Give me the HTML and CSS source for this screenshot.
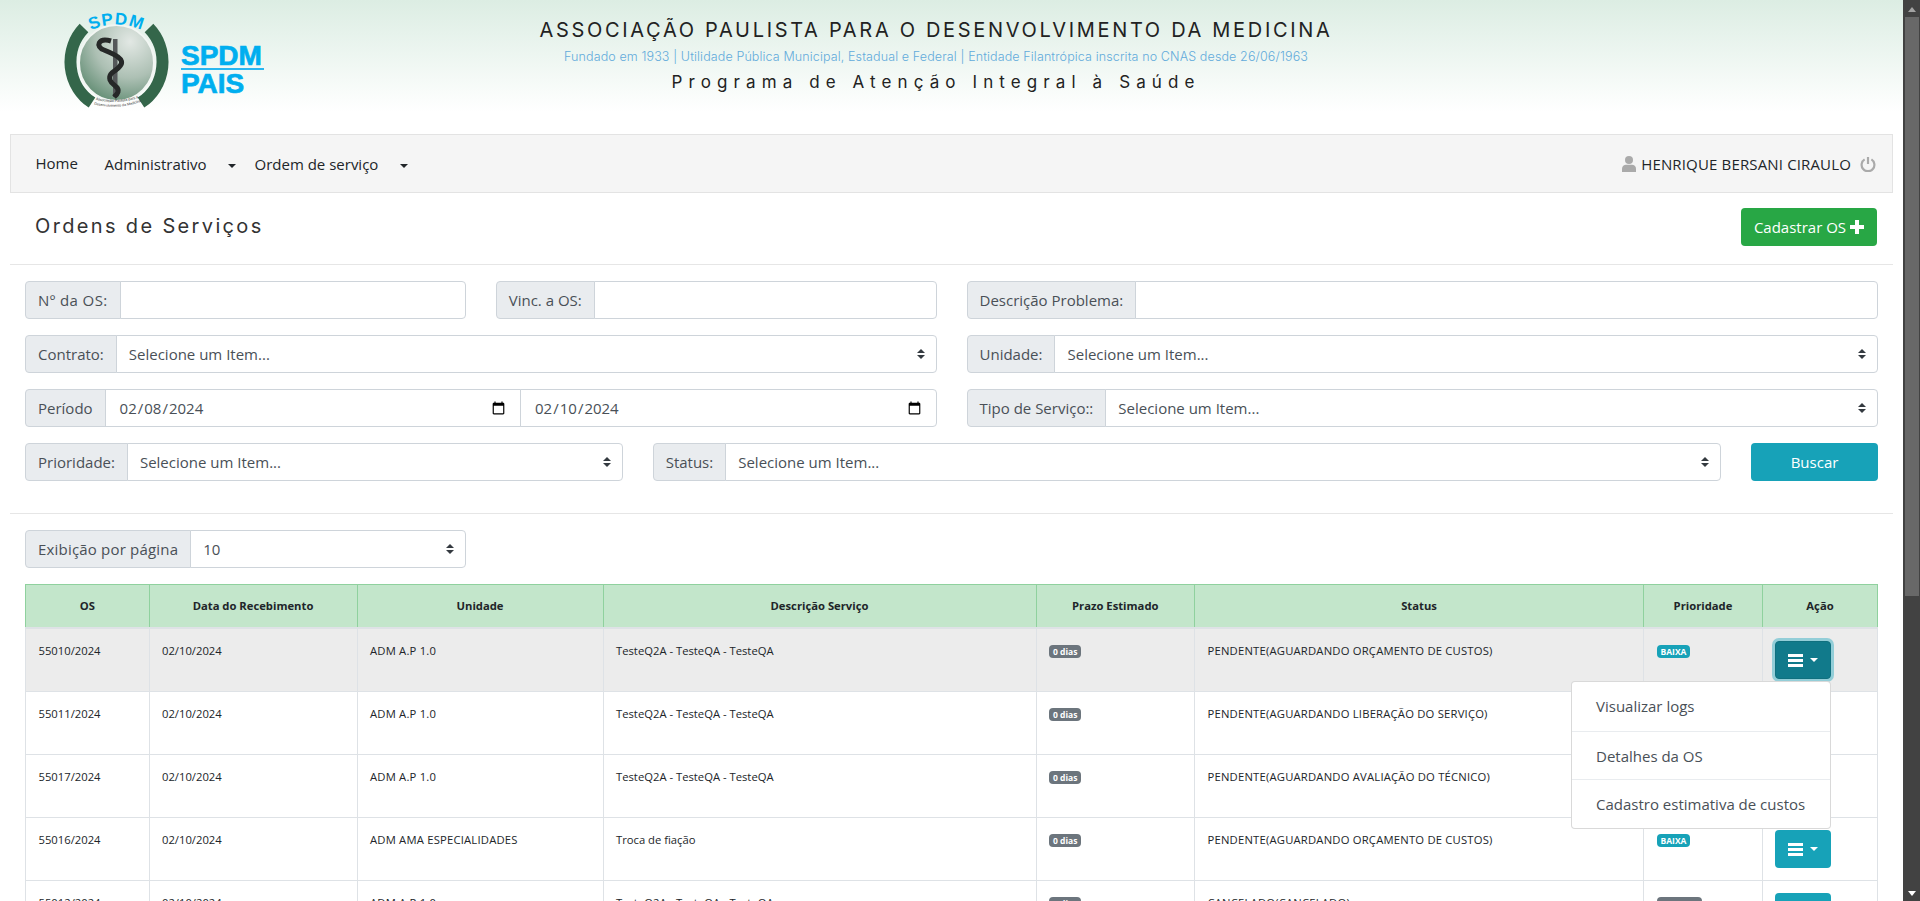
FILE: index.html
```html
<!DOCTYPE html>
<html lang="pt-BR">
<head>
  <meta charset="UTF-8">
  <title>Ordens de Serviços</title>
  <link rel="stylesheet" href="styles.css">
</head>
<body>
  <div class="page">
    <header class="site-header">
      <svg class="logo" viewBox="60 8 210 104" width="210" height="104">
        <defs>
          <radialGradient id="discFill" cx="0.68" cy="0.22" r="0.95">
            <stop offset="0" stop-color="#e2e8e4"/>
            <stop offset="0.5" stop-color="#adc0b4"/>
            <stop offset="1" stop-color="#4f8063"/>
          </radialGradient>
          <path id="arcTop" d="M82 35 Q116.5 14 151 35"/>
          <path id="arcBottom1" d="M90 98 Q116 107 144 96"/>
          <path id="arcBottom2" d="M89 103 Q116 112 146 100"/>
        </defs>
        <path class="logo-band" d="M84 28 A46 48 0 0 0 92 102.6"/>
        <path class="logo-band" d="M149 28 A46 48 0 0 1 141 102.6"/>
        <ellipse cx="116.5" cy="63" rx="37.5" ry="38" fill="url(#discFill)" stroke="#f2f6f3" stroke-width="2"/>
        <rect x="113" y="39" width="4.5" height="58" fill="#55585a"/>
        <path class="logo-snake" d="M111 41 C98 37 95 47 104 50 C114 54 126 59 120 66 C116 72 108 72 110 80 C112 86 120 86 118 92 C117 95 115 96 114 97"/>
        <text class="logo-arc"><textPath href="#arcTop" startOffset="50%" text-anchor="middle">SPDM</textPath></text>
        <text class="logo-tiny"><textPath href="#arcBottom1" startOffset="50%" text-anchor="middle">Associação Paulista para a</textPath></text>
        <text class="logo-tiny"><textPath href="#arcBottom2" startOffset="50%" text-anchor="middle">Desenvolvimento da Medicina</textPath></text>
        <text class="logo-word" x="181" y="65">SPDM</text>
        <rect x="181" y="68" width="83" height="2" fill="#29b6f0"/>
        <text class="logo-word" x="181" y="93">PAIS</text>
      </svg>
      <div class="header-text">
        <h1>ASSOCIAÇÃO PAULISTA PARA O DESENVOLVIMENTO DA MEDICINA</h1>
        <p class="header-sub">Fundado em 1933 | Utilidade Pública Municipal, Estadual e Federal | Entidade Filantrópica inscrita no CNAS desde 26/06/1963</p>
        <p class="header-prog">Programa de Atenção Integral à Saúde</p>
      </div>
    </header>

    <nav class="navbar">
      <a class="nav-link nav-home" href="#">Home</a>
      <a class="nav-link nav-admin" href="#">Administrativo<span class="caret"></span></a>
      <a class="nav-link nav-ordem" href="#">Ordem de serviço<span class="caret"></span></a>
      <div class="nav-user">
        <svg class="icon-user" viewBox="0 0 14 16" width="14" height="16"><circle cx="7" cy="4" r="4"/><path d="M0 16V12.5C0 10 2 8.7 4 8.7H10C12 8.7 14 10 14 12.5V16Z"/></svg>
        <span>HENRIQUE BERSANI CIRAULO</span>
        <svg class="icon-power" viewBox="0 0 16 16" width="16" height="16"><path d="M4.6 3.4A6.4 6.4 0 1 0 11.4 3.4"/><path d="M8 1V8"/></svg>
      </div>
    </nav>

    <div class="title-row">
      <h2>Ordens de Serviços</h2>
      <a class="btn btn-green" href="#">Cadastrar OS
        <svg viewBox="0 0 14 14" width="14" height="14"><path d="M5 0H9V5H14V9H9V14H5V9H0V5H5Z" fill="#fff"/></svg>
      </a>
    </div>

    <form class="filters">
      <div class="input-group col-3"><label class="label-wide">Nº da OS:</label><input type="text"></div>
      <div class="input-group col-3"><label>Vinc. a OS:</label><input type="text"></div>
      <div class="input-group col-6"><label>Descrição Problema:</label><input type="text"></div>

      <div class="input-group col-6"><label>Contrato:</label><div class="select-wrap"><select><option>Selecione um Item...</option></select></div></div>
      <div class="input-group col-6"><label>Unidade:</label><div class="select-wrap"><select><option>Selecione um Item...</option></select></div></div>

      <div class="input-group col-6"><label>Período</label><input class="date" type="date" value="2024-02-08"><input class="date date-end" type="date" value="2024-02-10"></div>
      <div class="input-group col-6"><label>Tipo de Serviço::</label><div class="select-wrap"><select><option>Selecione um Item...</option></select></div></div>

      <div class="input-group col-4"><label>Prioridade:</label><div class="select-wrap"><select><option>Selecione um Item...</option></select></div></div>
      <div class="input-group col-7"><label>Status:</label><div class="select-wrap"><select><option>Selecione um Item...</option></select></div></div>
      <button class="btn btn-info col-1" type="button">Buscar</button>
    </form>

    <hr class="divider">

    <div class="filters page-size">
      <div class="input-group col-3"><label class="label-long">Exibição por página</label><div class="select-wrap"><select><option>10</option><option>25</option></select></div></div>
    </div>

    <table class="os-table">
      <colgroup>
        <col class="c-os"><col class="c-data"><col class="c-unidade"><col class="c-desc">
        <col class="c-prazo"><col class="c-status"><col class="c-prio"><col class="c-acao">
      </colgroup>
      <thead>
        <tr>
          <th>OS</th><th>Data do Recebimento</th><th>Unidade</th><th>Descrição Serviço</th>
          <th>Prazo Estimado</th><th>Status</th><th>Prioridade</th><th>Ação</th>
        </tr>
      </thead>
      <tbody>
        <tr class="row-hover">
          <td>55010/2024</td><td>02/10/2024</td><td class="caps">ADM A.P 1.0</td><td>TesteQ2A - TesteQA - TesteQA</td>
          <td><span class="badge badge-gray">0 dias</span></td>
          <td class="caps">PENDENTE(AGUARDANDO ORÇAMENTO DE CUSTOS)</td>
          <td><span class="badge badge-info">BAIXA</span></td>
          <td class="cell-action">
            <div class="btn-group">
              <button class="btn btn-action is-open" type="button">
                <svg viewBox="0 0 15 13" width="15" height="13"><path d="M0 0H15V3H0ZM0 5H15V8H0ZM0 10H15V13H0Z" fill="#fff"/></svg><span class="caret"></span>
              </button>
              <div class="menu">
                <a href="#">Visualizar logs</a>
                <a href="#">Detalhes da OS</a>
                <a href="#">Cadastro estimativa de custos</a>
              </div>
            </div>
          </td>
        </tr>
        <tr>
          <td>55011/2024</td><td>02/10/2024</td><td class="caps">ADM A.P 1.0</td><td>TesteQ2A - TesteQA - TesteQA</td>
          <td><span class="badge badge-gray">0 dias</span></td>
          <td class="caps">PENDENTE(AGUARDANDO LIBERAÇÃO DO SERVIÇO)</td>
          <td><span class="badge badge-info">BAIXA</span></td>
          <td class="cell-action"><button class="btn btn-action" type="button"><svg viewBox="0 0 15 13" width="15" height="13"><path d="M0 0H15V3H0ZM0 5H15V8H0ZM0 10H15V13H0Z" fill="#fff"/></svg><span class="caret"></span></button></td>
        </tr>
        <tr>
          <td>55017/2024</td><td>02/10/2024</td><td class="caps">ADM A.P 1.0</td><td>TesteQ2A - TesteQA - TesteQA</td>
          <td><span class="badge badge-gray">0 dias</span></td>
          <td class="caps">PENDENTE(AGUARDANDO AVALIAÇÃO DO TÉCNICO)</td>
          <td><span class="badge badge-info">BAIXA</span></td>
          <td class="cell-action"><button class="btn btn-action" type="button"><svg viewBox="0 0 15 13" width="15" height="13"><path d="M0 0H15V3H0ZM0 5H15V8H0ZM0 10H15V13H0Z" fill="#fff"/></svg><span class="caret"></span></button></td>
        </tr>
        <tr>
          <td>55016/2024</td><td>02/10/2024</td><td class="caps">ADM AMA ESPECIALIDADES</td><td>Troca de fiação</td>
          <td><span class="badge badge-gray">0 dias</span></td>
          <td class="caps">PENDENTE(AGUARDANDO ORÇAMENTO DE CUSTOS)</td>
          <td><span class="badge badge-info">BAIXA</span></td>
          <td class="cell-action"><button class="btn btn-action" type="button"><svg viewBox="0 0 15 13" width="15" height="13"><path d="M0 0H15V3H0ZM0 5H15V8H0ZM0 10H15V13H0Z" fill="#fff"/></svg><span class="caret"></span></button></td>
        </tr>
        <tr>
          <td>55012/2024</td><td>02/10/2024</td><td class="caps">ADM A.P 1.0</td><td>TesteQ2A - TesteQA - TesteQA</td>
          <td><span class="badge badge-gray">0 dias</span></td>
          <td class="caps">CANCELADO(CANCELADO)</td>
          <td><span class="badge badge-gray">NORMAL</span></td>
          <td class="cell-action"><button class="btn btn-action" type="button"><svg viewBox="0 0 15 13" width="15" height="13"><path d="M0 0H15V3H0ZM0 5H15V8H0ZM0 10H15V13H0Z" fill="#fff"/></svg><span class="caret"></span></button></td>
        </tr>
      </tbody>
    </table>
  </div>

  <div class="scrollbar">
    <span class="arrow-up"></span>
    <span class="thumb"></span>
    <span class="arrow-down"></span>
  </div>
</body>
</html>
```

FILE: styles.css
```css
* {
  box-sizing: border-box;
}

body {
  margin: 0;
  height: 100vh;
  display: flex;
  overflow: hidden;
  background: #fff;
  color: #212529;
  font: 15px/24px "Open Sans", "Liberation Sans", sans-serif;
}

a {
  color: inherit;
  text-decoration: none;
}

.page {
  flex: 1;
  min-width: 0;
  overflow: hidden;
}

/* cabecalho */
.site-header {
  height: 134px;
  display: grid;
  grid-template-columns: 270px 1332px;
  background: linear-gradient(#dcede3, #fff 112px);
}

.logo {
  margin: 8px 0 0 60px;
}

.logo-band {
  fill: none;
  stroke: #34664a;
  stroke-width: 12;
}

.logo-snake {
  fill: none;
  stroke: #262828;
  stroke-width: 5;
}

.logo-arc {
  font: bold 17px "Liberation Sans", sans-serif;
  letter-spacing: 1px;
  fill: #00aeef;
}

.logo-tiny {
  font: 3.6px "Liberation Sans", sans-serif;
  fill: #333;
}

.logo-word {
  font: bold 28px "Liberation Sans", sans-serif;
  fill: #00aeef;
  stroke: #00aeef;
  stroke-width: .7;
}

.header-text {
  padding-top: 16px;
  text-align: center;
  font-family: Inter, "Liberation Sans", sans-serif;
}

.header-text h1 {
  margin: 0;
  font-size: 20px;
  font-weight: 400;
  line-height: 28px;
  letter-spacing: 2.68px;
  color: #222;
}

.header-sub {
  margin: 3px 0 0;
  font-size: 12.5px;
  font-weight: 300;
  line-height: 20px;
  letter-spacing: .12px;
  color: #62abdb;
}

.header-prog {
  margin: 3px 0 0;
  font-size: 17px;
  line-height: 24px;
  letter-spacing: 6.1px;
  color: #222;
}

/* menu */
.navbar {
  height: 59px;
  margin: 0 10px;
  padding: 0 16px 0 24.5px;
  display: flex;
  align-items: center;
  background: #f5f5f5;
  border: 1px solid #e3e3e3;
}

.nav-home {
  width: 69px;
  margin-bottom: 2px;
}

.nav-admin {
  width: 150px;
}

.nav-link .caret {
  margin-left: 22px;
}

.caret {
  display: inline-block;
  vertical-align: 2px;
  border-top: 4.5px solid #212529;
  border-left: 4.5px solid transparent;
  border-right: 4.5px solid transparent;
}

.nav-user {
  margin-left: auto;
  display: flex;
  align-items: center;
  gap: 5px;
  letter-spacing: .15px;
}

.icon-user {
  fill: #aaa;
}

.icon-power {
  margin-left: 4px;
  fill: none;
  stroke: #aaa;
  stroke-width: 2.2;
}

/* titulo */
.title-row {
  height: 72px;
  margin: 0 10px;
  padding: 0 16px 0 25px;
  display: flex;
  align-items: center;
  justify-content: space-between;
  border-bottom: 1px solid #e6e6e6;
}

.title-row h2 {
  margin: 0 0 5px;
  font: 400 20px/28px Inter, "Liberation Sans", sans-serif;
  letter-spacing: 2.35px;
  color: #333;
}

.btn {
  display: inline-flex;
  align-items: center;
  justify-content: center;
  height: 38px;
  border: 1px solid transparent;
  border-radius: 4px;
  color: #fff;
  font: inherit;
}

.btn-green {
  width: 136px;
  gap: 4px;
  background: #28a745;
  margin-bottom: 4px;
}

.btn-info {
  background: #17a2b8;
}

/* filtros */
.filters {
  margin: 0 25px;
  padding-top: 16px;
  display: grid;
  grid-template-columns: repeat(12, 1fr);
  gap: 16px 30px;
}

.col-1 { grid-column: span 1; }
.col-3 { grid-column: span 3; }
.col-4 { grid-column: span 4; }
.col-6 { grid-column: span 6; }
.col-7 { grid-column: span 7; }

.input-group {
  display: flex;
  height: 38px;
  color: #495057;
}

.input-group label {
  padding: 0 12px;
  display: flex;
  align-items: center;
  white-space: nowrap;
  background: #e9ecef;
  border: 1px solid #ced4da;
  border-radius: 4px 0 0 4px;
}

.input-group .label-wide {
  letter-spacing: .4px;
}

.input-group .label-long {
  letter-spacing: .19px;
}

.input-group input,
.select-wrap select {
  height: 38px;
  margin-left: -1px;
  padding: 0 12px;
  background: #fff;
  border: 1px solid #ced4da;
  border-radius: 0 4px 4px 0;
  color: #495057;
  font: inherit;
  outline: 0;
  appearance: none;
}

.select-wrap select {
  width: calc(100% + 1px);
}

.input-group input {
  flex: 1;
  min-width: 0;
}

.input-group .date {
  padding-left: 13px;
  border-radius: 0;
}

.input-group .date-end {
  border-radius: 0 4px 4px 0;
}

.select-wrap {
  flex: 1;
  position: relative;
}

.select-wrap::before,
.select-wrap::after {
  content: "";
  position: absolute;
  right: 12px;
  border-left: 4px solid transparent;
  border-right: 4px solid transparent;
}

.select-wrap::before {
  top: 14px;
  border-bottom: 4px solid #343a40;
}

.select-wrap::after {
  top: 20px;
  border-top: 4px solid #343a40;
}

.divider {
  height: 1px;
  margin: 32px 10px 0;
  border: 0;
  background: #e6e6e6;
}

/* tabela */
.os-table {
  width: 1852px;
  margin: 16px 25px 0;
  table-layout: fixed;
  border-collapse: collapse;
  font-size: 11.25px;
  line-height: 18px;
}

.c-os { width: 123.5px; }
.c-data { width: 208px; }
.c-unidade { width: 246px; }
.c-desc { width: 433px; }
.c-prazo { width: 158.5px; }
.c-status { width: 449px; }
.c-prio { width: 119px; }
.c-acao { width: 115px; }

.os-table th {
  padding: 12px;
  background: #c3e6cb;
  border: 1px solid #8fd19e;
  border-bottom-width: 1px;
  font-weight: 700;
  text-align: center;
}

.os-table td {
  height: 63px;
  padding: 13px 12px 11px 12.5px;
  vertical-align: top;
  border: 1px solid #dee2e6;
}

.os-table td.caps {
  letter-spacing: .2px;
}

.os-table td.cell-action {
  padding: 12px;
}

.os-table tbody tr:first-child td {
  border-top: 2px solid #dee2e6;
}

.row-hover {
  background: #ececec;
}

.badge {
  display: inline-block;
  padding: 2px 4px;
  border-radius: 4px;
  color: #fff;
  font-size: 8.5px;
  font-weight: 700;
  line-height: 9px;
  vertical-align: top;
  margin-top: 3px;
}

.badge-gray {
  background: #6c757d;
}

.badge-info {
  background: #17a2b8;
}

.btn-action {
  width: 56px;
  gap: 7px;
  background: #17a2b8;
}

.btn-action .caret {
  border-top-color: #fff;
}

.btn-action.is-open {
  background: #117a8b;
  border-color: #10707f;
  box-shadow: 0 0 0 3px rgba(58, 176, 195, .5);
}

.btn-group {
  position: relative;
  display: inline-block;
  vertical-align: top;
}

.menu {
  position: absolute;
  top: 40px;
  right: 0;
  z-index: 5;
  width: 260px;
  background: #fff;
  border: 1px solid rgba(0, 0, 0, .15);
  border-radius: 4px;
  color: #495057;
  font-size: 15px;
  line-height: 24px;
}

.menu a {
  display: block;
  height: 48.5px;
  padding: 12px 24px;
  white-space: nowrap;
  border-top: 1px solid #e9ecef;
}

.menu a:first-child {
  border-top: 0;
}

/* barra de rolagem */
.scrollbar {
  width: 17px;
  padding: 0 1.5px;
  display: flex;
  flex-direction: column;
  align-items: stretch;
  background: #424242;
}

.arrow-up,
.arrow-down {
  height: 17px;
  align-self: center;
  border-left: 4.5px solid transparent;
  border-right: 4.5px solid transparent;
}

.arrow-up {
  height: 0;
  margin: 7px 0 5px;
  border-bottom: 5px solid #a3a3a3;
}

.arrow-down {
  height: 0;
  margin: 5px 0 5px;
  border-top: 5px solid #fff;
}

.thumb {
  flex: none;
  height: 579px;
  margin-bottom: auto;
  background: #686868;
}
```
